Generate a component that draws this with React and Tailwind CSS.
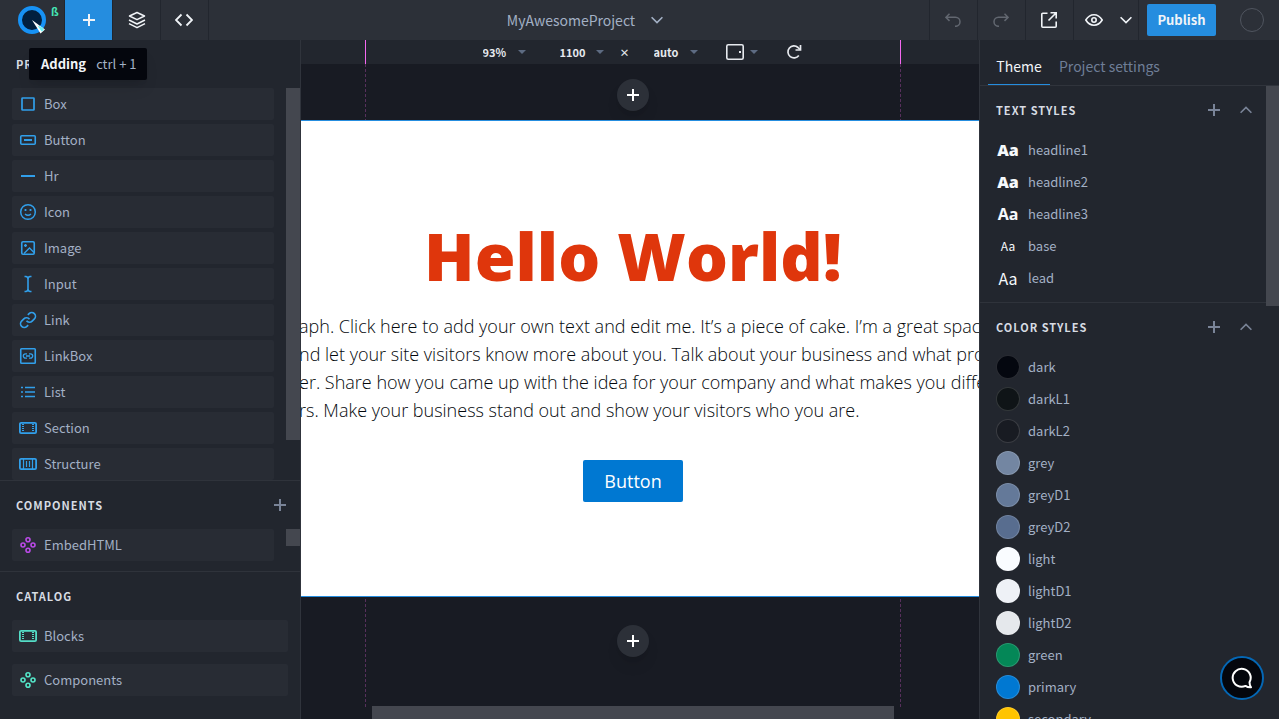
const primitives = [
  ["Box", "box"],
  ["Button", "button"],
  ["Hr", "hr"],
  ["Icon", "smile"],
  ["Image", "image"],
  ["Input", "input"],
  ["Link", "link"],
  ["LinkBox", "linkbox"],
  ["List", "list"],
  ["Section", "section"],
  ["Structure", "structure"],
];

const textStyles = [
  ["headline1", "text-[16px] font-black"],
  ["headline2", "text-[16px] font-black"],
  ["headline3", "text-[16px] font-bold"],
  ["base", "text-[12px]"],
  ["lead", "text-[16px]"],
];

const colorStyles = [
  ["dark", "bg-[#04070f]"],
  ["darkL1", "bg-[#0f1417]"],
  ["darkL2", "bg-[#181b22]"],
  ["grey", "bg-[#7386a2]"],
  ["greyD1", "bg-[#647999]"],
  ["greyD2", "bg-[#586d8f]"],
  ["light", "bg-[#f9fcff]"],
  ["lightD1", "bg-[#eef1f6]"],
  ["lightD2", "bg-[#e5e8ec]"],
  ["green", "bg-[#048757]"],
  ["primary", "bg-[#0078d2]"],
  ["secondary", "bg-[#ffc400]"],
];

const paragraph = [
  "aph. Click here to add your own text and edit me. It’s a piece of cake. I’m a great space",
  "nd let your site visitors know more about you. Talk about your business and what products",
  "er. Share how you came up with the idea for your company and what makes you different",
  "rs. Make your business stand out and show your visitors who you are.",
];

const shapes = {
  box: <rect x="3" y="3" width="12" height="12" rx="0.5" strokeWidth="1.7" />,
  button: (
    <>
      <rect x="1.75" y="4.75" width="14.5" height="8.5" rx="1" strokeWidth="1.6" />
      <path d="M5 9h8" strokeWidth="2" />
    </>
  ),
  hr: <path d="M2 9h14" strokeWidth="2" />,
  smile: (
    <>
      <circle cx="9" cy="9" r="7.3" strokeWidth="1.5" />
      <path d="M6 11q3 2.6 6 0" strokeWidth="1.4" />
      <path d="M6.5 6v2M11.5 6v2" strokeWidth="1.8" />
    </>
  ),
  image: (
    <>
      <rect x="2.75" y="2.75" width="12.5" height="12.5" rx="1.2" strokeWidth="1.6" />
      <path d="M5 14.5 10.5 9l4.500 4.500M6.500 5v3M5 6.500h3" strokeWidth="1.3" />
    </>
  ),
  input: (
    <path d="M5.5 1.500h1.300Q9 1.800 9 4Q9 1.800 11.200 1.500h1.300M9 3.500v11M5.500 16.500h1.300Q9 16.200 9 14Q9 16.200 11.200 16.500h1.300" strokeWidth="1.6" />
  ),
  link: (
    <g transform="scale(0.75)" strokeWidth="2.2">
      <path d="M10 13a5 5 0 0 0 7.540.540l3-3a5 5 0 0 0-7.070-7.070l-1.720 1.710" />
      <path d="M14 11a5 5 0 0 0-7.540-.540l-3 3a5 5 0 0 0 7.070 7.070l1.710-1.710" />
    </g>
  ),
  linkbox: (
    <>
      <rect x="1.75" y="1.75" width="14.5" height="14.5" rx="0.8" strokeWidth="1.6" />
      <path d="M8 6.800H6.500a2.200 2.200 0 0 0 0 4.400H8M10 6.800h1.500a2.200 2.200 0 0 1 0 4.400H10M7 9h4" strokeWidth="1.3" />
    </>
  ),
  list: <path d="M6 4.500h10M6 9h10M6 13.500h10M2 4.500h2M2 9h2M2 13.500h2" strokeWidth="1.5" />,
  section: (
    <>
      <rect x="0.9" y="3.9" width="16.2" height="10.2" rx="1.2" strokeWidth="1.8" />
      <path d="M4 5v8M14 5v8" strokeWidth="2" strokeDasharray="1 1" />
    </>
  ),
  structure: (
    <>
      <rect x="0.9" y="3.9" width="16.2" height="10.2" rx="1.2" strokeWidth="1.8" />
      <path d="M4.500 4v10M13.500 4v10M7.500 6v6M10.500 6v6" strokeWidth="1.2" />
    </>
  ),
  components: (
    <g strokeWidth="1.6">
      <circle cx="9" cy="3.7" r="2" />
      <circle cx="9" cy="14.3" r="2" />
      <circle cx="4" cy="9" r="2" />
      <circle cx="14" cy="9" r="2" />
    </g>
  ),
};

function ItemIcon({ name, className }) {
  return (
    <svg viewBox="0 0 18 18" fill="none" stroke="currentColor" aria-hidden="true" className={"size-[18px] shrink-0 " + className}>
      {shapes[name]}
    </svg>
  );
}

function Item({ label, icon, color = "text-[#319fea]" }) {
  return (
    <li>
      <button type="button" className="flex h-8 w-full items-center gap-[7px] rounded-xs bg-[#282c34] pl-[7px] text-left text-[13px] text-[#a3b0c5]">
        <ItemIcon name={icon} className={color} />
        <span>{label}</span>
      </button>
    </li>
  );
}

function Plus({ className = "" }) {
  return (
    <svg viewBox="0 0 12 12" stroke="currentColor" strokeWidth="2" aria-hidden="true" className={"size-3 " + className}>
      <path d="M6 0v12M0 6h12" />
    </svg>
  );
}

function Chevron({ className = "" }) {
  return (
    <svg viewBox="0 0 12 8" fill="none" stroke="currentColor" strokeWidth="1.6" aria-hidden="true" className={"h-2 w-3 shrink-0 " + className}>
      <path d="M.600 1.200 6 6.600l5.400-5.400" />
    </svg>
  );
}

function Caret() {
  return (
    <svg viewBox="0 0 8 4" aria-hidden="true" className="h-1 w-2 shrink-0 fill-[#5d6b82]">
      <path d="M0 0h8L4 4z" />
    </svg>
  );
}

function SectionTitle({ children }) {
  return <h2 className="text-[11px] font-bold tracking-[1px] text-[#d7dce3]">{children}</h2>;
}

function Picker({ label, value, width }) {
  return (
    <label className="flex items-center">
      <select aria-label={label} defaultValue={value} className={"appearance-none bg-transparent text-[11px] font-bold text-[#e6e9ee] outline-none " + width}>
        <option>{value}</option>
      </select>
      <Caret />
    </label>
  );
}

function HeaderButton({ label, className = "", children }) {
  return (
    <button type="button" aria-label={label} className={"flex h-full w-12 shrink-0 items-center justify-center border-[#22262e] " + className}>
      {children}
    </button>
  );
}

function Header() {
  return (
    <header className="flex h-10 shrink-0 items-center bg-[#2c3038] text-[#f1f4f8]">
      <a href="#" aria-label="Home" className="flex h-full w-[65px] shrink-0 items-start border-r border-[#22262e] pt-[5px] pl-[17px]">
        <svg viewBox="0 0 30 30" aria-hidden="true" className="size-[30px]">
          <circle cx="15" cy="15" r="12" fill="#02203f" stroke="#1792f5" strokeWidth="4" />
          <path d="M15 15 28 24.500 23.500 28.500z" fill="#fff" />
          <path d="M20.500 20.500 25.500 22.500 27 25 24.500 26.500z" fill="#6ff3f5" />
        </svg>
        <span className="pl-1 text-[11px] leading-3 font-bold text-[#45e5b5]">ß</span>
      </a>
      <HeaderButton label="Add" className="border-r bg-[#258ddf]"><Plus /></HeaderButton>
      <HeaderButton label="Layers" className="border-r">
        <svg viewBox="0 0 18 18" fill="none" stroke="currentColor" strokeWidth="1.5" aria-hidden="true" className="size-[18px]">
          <path d="M9 1.500 16.500 5 9 8.700 1.500 5zM1 9l8 4 8-4M1 12.700l8 4 8-4" strokeLinejoin="round" />
        </svg>
      </HeaderButton>
      <HeaderButton label="Code" className="border-r pr-px">
        <svg viewBox="0 0 18 14" fill="none" stroke="currentColor" strokeWidth="1.8" aria-hidden="true" className="h-[14px] w-[18px]">
          <path d="M6.500 1.500 1 7l5.500 5.500M11.500 1.500 17 7l-5.500 5.500" />
        </svg>
      </HeaderButton>
      <div className="flex min-w-0 flex-1 justify-center pl-8">
        <button type="button" className="flex items-center gap-4 text-[14px] text-[#a3b0c5]">
          MyAwesomeProject <Chevron />
        </button>
      </div>
      <HeaderButton label="Undo" className="border-l pr-px text-[#626770]">
        <svg viewBox="0 0 16 14" fill="none" stroke="currentColor" strokeWidth="1.5" aria-hidden="true" className="h-[14px] w-4">
          <path d="M4.500 .700.900 4.300l3.600 3.600M1 4.300h9.500a4.500 4.500 0 0 1 0 9H10" />
        </svg>
      </HeaderButton>
      <HeaderButton label="Redo" className="border-l pr-px text-[#626770]">
        <svg viewBox="0 0 16 14" fill="none" stroke="currentColor" strokeWidth="1.5" aria-hidden="true" className="h-[14px] w-4">
          <path d="M11.500 .700 15.100 4.300l-3.600 3.600M15 4.300H5.500a4.500 4.500 0 0 0 0 9H6" />
        </svg>
      </HeaderButton>
      <HeaderButton label="Open in new tab" className="border-l pr-px">
        <svg viewBox="0 0 16 16" fill="none" stroke="currentColor" strokeWidth="1.6" aria-hidden="true" className="size-4">
          <path d="M6.500 1.200H1.800a1 1 0 0 0-1 1v12a1 1 0 0 0 1 1h12.400a1 1 0 0 0 1-1V9.500M9.500.800h5.700v5.700M15 1 7.500 8.500" />
        </svg>
      </HeaderButton>
      <div className="flex h-full w-[66px] shrink-0 items-center justify-center gap-[17px] border-x border-[#22262e] pl-[5px]">
        <button type="button" aria-label="Preview">
          <svg viewBox="0 0 18 12" fill="none" stroke="currentColor" strokeWidth="1.6" aria-hidden="true" className="h-3 w-[18px]">
            <path d="M.800 6Q4 .800 9 .800T17.200 6Q14 11.200 9 11.200T.800 6z" />
            <circle cx="9" cy="6" r="2.2" />
          </svg>
        </button>
        <button type="button" aria-label="Preview options"><Chevron /></button>
      </div>
      <button type="button" className="ml-2 h-8 w-[69px] shrink-0 rounded-xs bg-[#258ddf] text-[13px] font-bold">Publish</button>
      <button type="button" aria-label="Account" className="mr-[15px] ml-6 size-6 shrink-0 rounded-full border border-[#50555f]" />
    </header>
  );
}

function LeftPanel() {
  return (
    <aside className="flex w-[301px] shrink-0 flex-col border-r border-[#30343c] bg-[#22262e]">
      <div className="relative flex h-12 shrink-0 items-center px-4">
        <SectionTitle>PRIMITIVES</SectionTitle>
        <div role="tooltip" className="absolute top-2 left-[29px] flex h-8 items-center gap-[10px] rounded-xs bg-[#04060d] pr-[10px] pl-3 text-[13px] whitespace-nowrap shadow-lg">
          <b className="text-[#f1f4f8]">Adding</b>
          <span className="text-[#a3b0c5]">ctrl + 1</span>
        </div>
      </div>
      <div className="flex h-[392px] shrink-0 items-start justify-between overflow-hidden">
        <ul className="ml-3 flex w-[262px] flex-col gap-1">
          {primitives.map(([label, icon]) => <Item key={label} label={label} icon={icon} />)}
        </ul>
        <div className="h-[352px] w-[14px] bg-[#44474f]" />
      </div>
      <div className="flex h-[49px] shrink-0 items-center justify-between border-t border-[#2f333b] pr-[14px] pl-4">
        <SectionTitle>COMPONENTS</SectionTitle>
        <button type="button" aria-label="Add component" className="text-[#7a8498]"><Plus /></button>
      </div>
      <div className="flex h-[42px] shrink-0 items-start justify-between">
        <ul className="ml-3 w-[262px]"><Item label="EmbedHTML" icon="components" color="text-[#b94ae6]" /></ul>
        <div className="h-[17px] w-[14px] bg-[#44474f]" />
      </div>
      <div className="flex h-[49px] shrink-0 items-center border-t border-[#2f333b] px-4">
        <SectionTitle>CATALOG</SectionTitle>
      </div>
      <ul className="flex flex-col gap-3 px-3">
        <Item label="Blocks" icon="section" color="text-[#54dcc6]" />
        <Item label="Components" icon="components" color="text-[#54e6c8]" />
      </ul>
    </aside>
  );
}

function AddSection() {
  return (
    <button type="button" aria-label="Add section" className="flex size-8 items-center justify-center rounded-full bg-[#2c3038] text-white shadow-lg">
      <Plus />
    </button>
  );
}

function Guide({ side }) {
  return (
    <div className={"pointer-events-none absolute inset-y-0 flex w-px flex-col " + side}>
      <div className="h-6 bg-[#f368f0]" />
      <div className="mb-3 flex-1 border-l border-dashed border-[#57305c]" />
    </div>
  );
}

function Canvas() {
  return (
    <main className="relative flex min-w-0 flex-1 flex-col overflow-hidden bg-[#181b23]">
      <Guide side="left-16" />
      <Guide side="right-[78px]" />
      <div className="flex h-6 shrink-0 items-center justify-center bg-[#22262e] pl-1 text-[#e6e9ee]">
        <Picker label="Zoom" value="93%" width="w-[35px]" />
        <div className="flex items-center pl-[34px]"><Picker label="Width" value="1100" width="w-9" /></div>
        <span className="pl-4 text-[10px] font-bold">×</span>
        <div className="flex items-center pl-6"><Picker label="Height" value="auto" width="w-9" /></div>
        <button type="button" aria-label="Device" className="flex items-center gap-[6px] pl-7">
          <svg viewBox="0 0 18 16" fill="none" stroke="currentColor" strokeWidth="1.6" aria-hidden="true" className="h-4 w-[18px]">
            <rect x=".8" y=".8" width="16.4" height="14.4" rx="1.5" />
            <path d="M14 7v2" strokeWidth="2" />
          </svg>
          <Caret />
        </button>
        <button type="button" aria-label="Refresh" className="pl-7">
          <svg viewBox="0 0 16 16" fill="none" stroke="currentColor" strokeWidth="1.700" aria-hidden="true" className="size-4">
            <path d="M12.800 11.500A6 6 0 1 1 12 3.500l2 2" />
            <path d="M14.500 1v5h-5" />
          </svg>
        </button>
      </div>
      <div className="mr-[14px] flex h-14 shrink-0 items-end justify-center pb-[9px]">
        <AddSection />
      </div>
      <section className="relative h-[477px] shrink-0 overflow-hidden border-y border-[#258ddf] bg-white pt-[88px] font-['Open_Sans',sans-serif]">
        <h1 className="mr-[14px] text-center text-[66px] leading-[92px] font-extrabold whitespace-nowrap text-[#df360c]">Hello World!</h1>
        <div className="-ml-0.5 mt-[11px] text-[18px] leading-7 font-light whitespace-nowrap text-[#04080c]">
          {paragraph.map((line) => <p key={line}>{line}</p>)}
        </div>
        <div className="mt-9 mr-[14px] flex justify-center">
          <button type="button" className="h-[42px] w-[100px] rounded-xs bg-[#0078d2] text-[18px] text-white">Button</button>
        </div>
      </section>
      <div className="mr-[14px] flex flex-1 justify-center pt-7"><AddSection /></div>
      <div className="mr-[85px] ml-[71px] h-[13px] shrink-0 bg-[#44474f]" />
    </main>
  );
}

function StyleHeader({ title }) {
  return (
    <div className="flex h-12 items-center text-[#7a8498]">
      <SectionTitle>{title}</SectionTitle>
      <button type="button" aria-label={"Add to " + title} className="ml-auto"><Plus /></button>
      <button type="button" aria-label={"Collapse " + title} className="ml-5"><Chevron className="rotate-180" /></button>
    </div>
  );
}

function RightPanel() {
  return (
    <aside className="flex w-[300px] shrink-0 flex-col border-l border-[#30343c] bg-[#22262e]">
      <nav className="flex h-[46px] shrink-0 items-end border-b border-[#30343c] pl-2 text-[14px]">
        <button type="button" className="h-[37px] w-[62px] border-b border-[#258ddf] text-[#f1f4f8]">Theme</button>
        <button type="button" className="h-[37px] border-b border-transparent px-[9px] text-[#6f7e97]">Project settings</button>
      </nav>
      <div className="flex min-h-0 flex-1 overflow-hidden">
        <div className="min-w-0 flex-1">
          <section className="h-[217px] border-b border-[#2f333b] pr-[14px] pl-4">
            <StyleHeader title="TEXT STYLES" />
            <ul>
              {textStyles.map(([name, style]) => (
                <li key={name} className="flex h-8 items-center gap-2 text-[13px] text-[#a3b0c5]">
                  <span className={"w-6 text-center text-[#f6f9fc] " + (name.startsWith("headline") ? "font-['Open_Sans',sans-serif] " : "") + style}>
                    Aa
                  </span>
                  {name}
                </li>
              ))}
            </ul>
          </section>
          <section className="pr-[14px] pl-4">
            <StyleHeader title="COLOR STYLES" />
            <ul>
              {colorStyles.map(([name, fill]) => (
                <li key={name} className="flex h-8 items-center gap-2 text-[13px] text-[#a3b0c5]">
                  <span className={"size-6 rounded-full border border-white/15 " + fill} />
                  {name}
                </li>
              ))}
            </ul>
          </section>
        </div>
        <div className="h-[220px] w-[13px] bg-[#44474f]" />
      </div>
    </aside>
  );
}

export default function App() {
  return (
    <div className="flex h-screen flex-col overflow-hidden bg-[#22262e] font-['Noto_Sans_CJK_SC',sans-serif]">
      <Header />
      <div className="flex min-h-0 flex-1">
        <LeftPanel />
        <Canvas />
        <RightPanel />
      </div>
      <button type="button" aria-label="Open chat" className="fixed right-[15px] bottom-[19px] flex size-11 items-center justify-center rounded-full border-2 border-[#0467b5] bg-[#04060d] text-white">
        <svg viewBox="0 0 22 22" fill="none" stroke="currentColor" strokeWidth="2" strokeLinejoin="round" aria-hidden="true" className="size-[22px]">
          <path d="M18.500 15.200A9 9 0 1 0 14.500 18.900Q17 20.500 20 20.200Q18.500 18 18.500 15.200z" />
        </svg>
      </button>
    </div>
  );
}
